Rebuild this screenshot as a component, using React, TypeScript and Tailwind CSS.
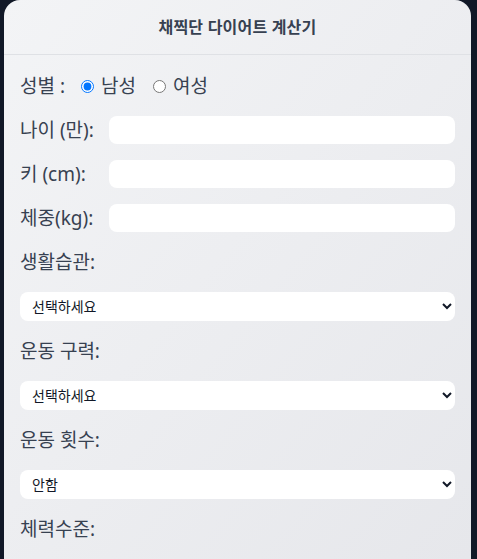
export default function App() {
  const font = { fontFamily: '"Noto Sans", "Noto Sans CJK KR", sans-serif' };

  return (
    <main className="min-h-screen bg-[#111827] pl-[4px] pr-[6px]" style={font}>
      <div className="min-h-[559px] rounded-t-2xl bg-gradient-to-br from-[#f3f4f6] to-[#e6e7eb] text-[#374151]">
        {/* Header */}
        <div className="h-[55px] flex items-center justify-center border-b border-[#dfe1e5]">
          <h1 className="text-base font-semibold tracking-[0.2px]">채찍단 다이어트 계산기</h1>
        </div>

        <form className="px-4 pt-[17px] flex flex-col gap-4">
          {/* Gender */}
          <div className="h-7 flex items-center text-[19px] leading-7">
            <span className="mr-[16px]">성별 :</span>
            <label className="flex items-center">
              <input type="radio" name="gender" defaultChecked className="w-[13px] h-[13px] m-0 mr-[7px]" />
              남성
            </label>
            <label className="flex items-center ml-[17px]">
              <input type="radio" name="gender" className="w-[13px] h-[13px] m-0 mr-[7px]" />
              여성
            </label>
          </div>

          {[
            ["나이 (만):"],
            ["키 (cm):"],
            ["체중(kg):"],
          ].map(([label]) => (
            <div key={label} className="h-7 flex items-center">
              <span className="w-[89px] shrink-0 text-[19px] leading-7">{label}</span>
              <input type="text" className="flex-1 h-7 rounded-lg bg-white px-2 outline-none" />
            </div>
          ))}

          {[
            ["생활습관:", "선택하세요"],
            ["운동 구력:", "선택하세요"],
            ["운동 횟수:", "안함"],
          ].map(([label, value]) => (
            <div key={label} className="flex flex-col gap-4">
              <span className="h-7 leading-7 text-[19px]">{label}</span>
              <select
                defaultValue={value}
                className="h-[29px] w-full rounded-lg bg-white pl-2 pr-1 text-sm text-[#111827] outline-none"
              >
                <option>{value}</option>
              </select>
            </div>
          ))}

          <span className="h-7 leading-7 text-[19px]">체력수준:</span>
        </form>
      </div>
    </main>
  );
}
